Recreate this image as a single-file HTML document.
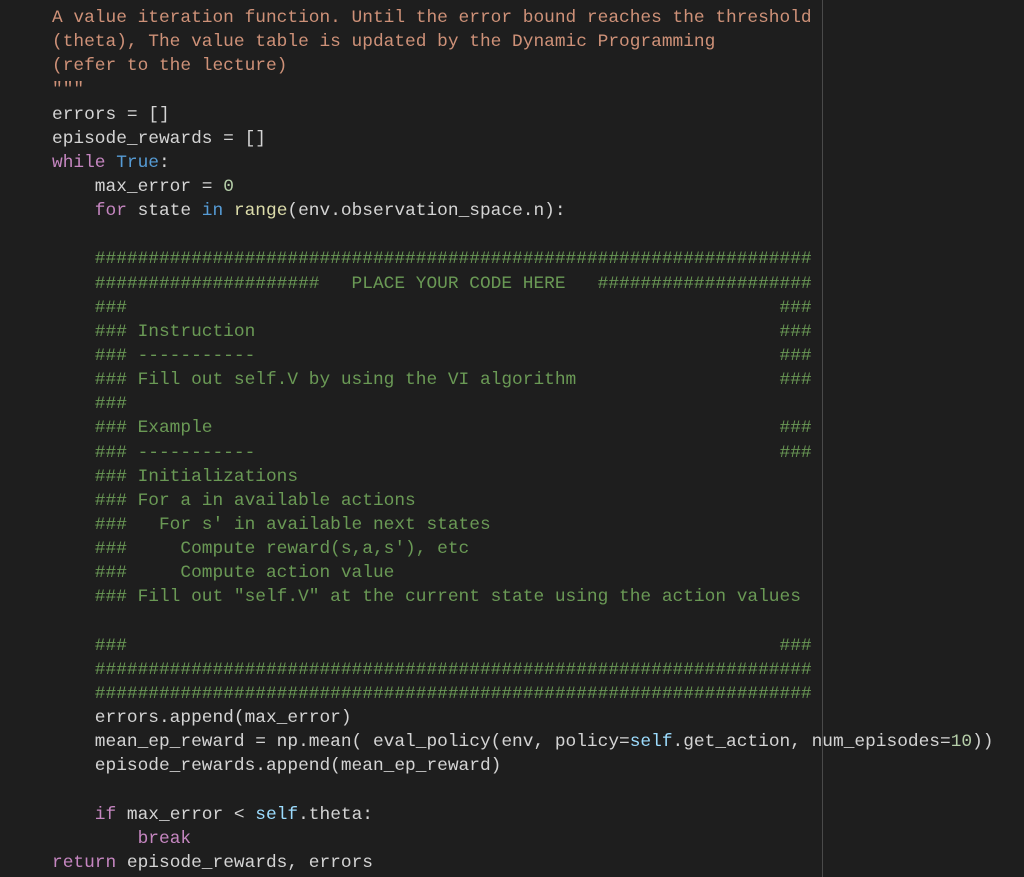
<!DOCTYPE html>
<html><head><meta charset="utf-8"><style>
html,body{margin:0;padding:0;background:#1e1e1e;width:1024px;height:877px;overflow:hidden}
.g{position:absolute;left:822px;top:0;width:1px;height:877px;background:#4a4a4a}
pre{position:absolute;left:52px;top:6px;margin:0;font-family:"Liberation Mono",monospace;font-size:17.83px;line-height:24.14px;color:#d4d4d4;white-space:pre}
.s{color:#ce9178}.k{color:#c586c0}.b{color:#569cd6}.n{color:#b5cea8}.f{color:#dcdcaa}.c{color:#6a9955}.v{color:#9cdcfe}
</style></head><body><div class="g"></div><pre><span class="s">A value iteration function. Until the error bound reaches the threshold
(theta), The value table is updated by the Dynamic Programming
(refer to the lecture)
"""</span>
errors = []
episode_rewards = []
<span class="k">while</span> <span class="b">True</span>:
    max_error = <span class="n">0</span>
    <span class="k">for</span> state <span class="b">in</span> <span class="f">range</span>(env.observation_space.n):

<span class="c">    ###################################################################
    #####################   PLACE YOUR CODE HERE   ####################
    ###                                                             ###
    ### Instruction                                                 ###
    ### -----------                                                 ###
    ### Fill out self.V by using the VI algorithm                   ###
    ###
    ### Example                                                     ###
    ### -----------                                                 ###
    ### Initializations
    ### For a in available actions
    ###   For s' in available next states
    ###     Compute reward(s,a,s'), etc
    ###     Compute action value
    ### Fill out "self.V" at the current state using the action values

    ###                                                             ###
    ###################################################################
    ###################################################################</span>
    errors.append(max_error)
    mean_ep_reward = np.mean( eval_policy(env, policy=<span class="v">self</span>.get_action, num_episodes=<span class="n">10</span>))
    episode_rewards.append(mean_ep_reward)

    <span class="k">if</span> max_error &lt; <span class="v">self</span>.theta:
        <span class="k">break</span>
<span class="k">return</span> episode_rewards, errors</pre></body></html>
